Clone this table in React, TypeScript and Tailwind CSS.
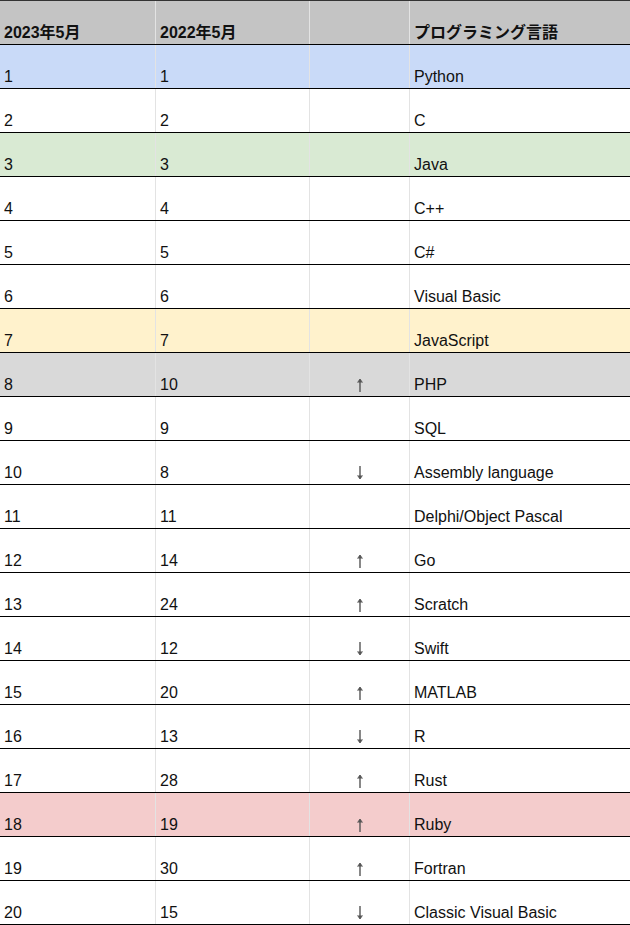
type Row = {
    now: number
    prev: number
    trend?: 'up' | 'down'
    lang: string
    bg?: string
}

const rows: Row[] = [
    { now: 1, prev: 1, lang: 'Python', bg: 'bg-[#c9daf8]' },
    { now: 2, prev: 2, lang: 'C' },
    { now: 3, prev: 3, lang: 'Java', bg: 'bg-[#d9ead3]' },
    { now: 4, prev: 4, lang: 'C++' },
    { now: 5, prev: 5, lang: 'C#' },
    { now: 6, prev: 6, lang: 'Visual Basic' },
    { now: 7, prev: 7, lang: 'JavaScript', bg: 'bg-[#fff2cc]' },
    { now: 8, prev: 10, trend: 'up', lang: 'PHP', bg: 'bg-[#d9d9d9]' },
    { now: 9, prev: 9, lang: 'SQL' },
    { now: 10, prev: 8, trend: 'down', lang: 'Assembly language' },
    { now: 11, prev: 11, lang: 'Delphi/Object Pascal' },
    { now: 12, prev: 14, trend: 'up', lang: 'Go' },
    { now: 13, prev: 24, trend: 'up', lang: 'Scratch' },
    { now: 14, prev: 12, trend: 'down', lang: 'Swift' },
    { now: 15, prev: 20, trend: 'up', lang: 'MATLAB' },
    { now: 16, prev: 13, trend: 'down', lang: 'R' },
    { now: 17, prev: 28, trend: 'up', lang: 'Rust' },
    { now: 18, prev: 19, trend: 'up', lang: 'Ruby', bg: 'bg-[#f4cccc]' },
    { now: 19, prev: 30, trend: 'up', lang: 'Fortran' },
    { now: 20, prev: 15, trend: 'down', lang: 'Classic Visual Basic' },
]

const cell = 'h-full flex items-end pl-1 pb-[3px] border-r border-[#e3e3e3]'

// petite flèche fine, comme dans la feuille de calcul
function Arrow({ dir }: { dir: 'up' | 'down' }) {
    return (
        <svg width="8" height="14" viewBox="0 0 8 14" className="mb-[2px]" fill="none" stroke="#555" strokeWidth="1.4">
            {dir === 'up' ? (
                <>
                    <line x1="4" y1="1.5" x2="4" y2="14" />
                    <path d="M1.5 4.5 L4 1 L6.5 4.5" fill="#555" strokeWidth="0.8" />
                </>
            ) : (
                <>
                    <line x1="4" y1="0" x2="4" y2="12.5" />
                    <path d="M1.5 9.5 L4 13 L6.5 9.5" fill="#555" strokeWidth="0.8" />
                </>
            )}
        </svg>
    )
}

function TableRow({ row }: { row: Row }) {
    return (
        <div className={`flex h-[44px] border-b border-black ${row.bg ?? 'bg-white'}`}>
            <div className={`${cell} w-[156px]`}>{row.now}</div>
            <div className={`${cell} w-[154px]`}>{row.prev}</div>
            <div className="h-full flex items-end justify-center w-[100px] border-r border-[#e3e3e3] pb-[2px]">
                {row.trend && <Arrow dir={row.trend} />}
            </div>
            <div className="h-full flex items-end pl-1 pb-[3px] flex-1">{row.lang}</div>
        </div>
    )
}

export default function App() {
    return (
        <div
            className="w-[630px] border-t border-[#333] text-[16px] leading-4 text-[#111]"
            style={{ fontFamily: '"Liberation Sans", Arial, "Noto Sans CJK JP", sans-serif' }}
        >
            <div className="flex h-[44px] border-b border-black bg-[#c4c4c4] font-bold">
                <div className={`${cell} w-[156px] border-[#b0b0b0]`}>2023年5月</div>
                <div className={`${cell} w-[154px] border-[#b0b0b0]`}>2022年5月</div>
                <div className={`${cell} w-[100px] border-[#b0b0b0]`}></div>
                <div className="h-full flex items-end pl-1 pb-[3px] flex-1">プログラミング言語</div>
            </div>
            {rows.map((row) => (
                <TableRow key={row.now} row={row} />
            ))}
        </div>
    )
}
